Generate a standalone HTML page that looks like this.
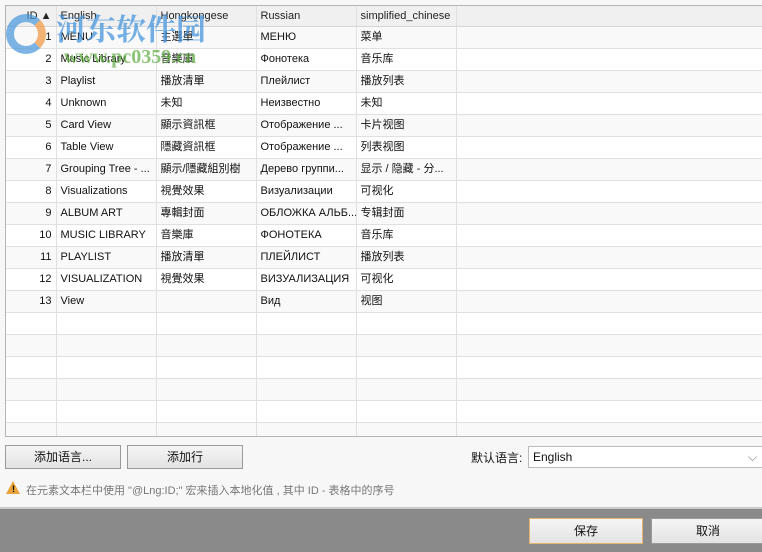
<!DOCTYPE html>
<html><head><meta charset="utf-8"><style>
*{margin:0;padding:0;box-sizing:border-box}
body{width:762px;height:552px;background:#f7f7f7;font-family:"Liberation Sans","Noto Sans CJK SC",sans-serif;font-size:11px;color:#111;position:relative;overflow:hidden}
.grid{position:absolute;left:5px;top:5px;width:760px;height:432px;border:1px solid #b5b5b5;background:#fff;overflow:hidden}
table{border-collapse:collapse;table-layout:fixed;width:760px}
td,th{height:22px;border-right:1px solid #e0e0e0;border-bottom:1px solid #e0e0e0;padding:0 4px;white-space:nowrap;overflow:hidden;font-weight:normal;text-align:left;vertical-align:middle;line-height:14px}
th{height:20px;background:#f0f0f0;color:#222;border-bottom:1px solid #d6d6d6}
td.id{text-align:right}
tr:nth-child(even) td{background:#f9f9f9}
.btn{position:absolute;height:24px;border:1px solid #9a9a9a;background:linear-gradient(#f5f5f5,#e3e3e3);text-align:center;line-height:22px;font-size:12px}
.foot{position:absolute;left:0;top:507px;width:762px;height:45px;background:#8a8a8a;border-top:2px solid #ccc}
.wm{position:absolute;top:10px;left:56px;font-size:30px;font-weight:bold;color:rgba(70,150,220,.75);font-family:"Noto Serif CJK SC",serif;line-height:34px}
.wm2{position:absolute;left:64px;top:46px;font-size:20px;font-weight:bold;color:rgba(90,170,60,.7);font-family:"Liberation Serif",serif}
.logo{position:absolute;left:6px;top:14px;width:40px;height:40px;border-radius:50%;border:8px solid rgba(70,150,220,.7);border-right-color:rgba(240,150,60,.7)}
</style></head><body>
<div class="grid">
<table>
<colgroup><col style="width:50px"><col style="width:100px"><col style="width:100px"><col style="width:100px"><col style="width:100px"><col></colgroup>
<tr><th style="text-align:right">ID ▲</th><th>English</th><th>Hongkongese</th><th>Russian</th><th>simplified_chinese</th><th style="border-right:none"></th></tr>
<tr><td class="id">1</td><td>MENU</td><td>主選單</td><td>МЕНЮ</td><td>菜单</td><td></td></tr>
<tr><td class="id">2</td><td>Music Library</td><td>音樂庫</td><td>Фонотека</td><td>音乐库</td><td></td></tr>
<tr><td class="id">3</td><td>Playlist</td><td>播放清單</td><td>Плейлист</td><td>播放列表</td><td></td></tr>
<tr><td class="id">4</td><td>Unknown</td><td>未知</td><td>Неизвестно</td><td>未知</td><td></td></tr>
<tr><td class="id">5</td><td>Card View</td><td>顯示資訊框</td><td>Отображение ...</td><td>卡片视图</td><td></td></tr>
<tr><td class="id">6</td><td>Table View</td><td>隱藏資訊框</td><td>Отображение ...</td><td>列表视图</td><td></td></tr>
<tr><td class="id">7</td><td>Grouping Tree - ...</td><td>顯示/隱藏組別樹</td><td>Дерево группи...</td><td>显示 / 隐藏 - 分...</td><td></td></tr>
<tr><td class="id">8</td><td>Visualizations</td><td>視覺效果</td><td>Визуализации</td><td>可视化</td><td></td></tr>
<tr><td class="id">9</td><td>ALBUM ART</td><td>專輯封面</td><td>ОБЛОЖКА АЛЬБ...</td><td>专辑封面</td><td></td></tr>
<tr><td class="id">10</td><td>MUSIC LIBRARY</td><td>音樂庫</td><td>ФОНОТЕКА</td><td>音乐库</td><td></td></tr>
<tr><td class="id">11</td><td>PLAYLIST</td><td>播放清單</td><td>ПЛЕЙЛИСТ</td><td>播放列表</td><td></td></tr>
<tr><td class="id">12</td><td>VISUALIZATION</td><td>視覺效果</td><td>ВИЗУАЛИЗАЦИЯ</td><td>可视化</td><td></td></tr>
<tr><td class="id">13</td><td>View</td><td></td><td>Вид</td><td>视图</td><td></td></tr>
<tr><td></td><td></td><td></td><td></td><td></td><td></td></tr>
<tr><td></td><td></td><td></td><td></td><td></td><td></td></tr>
<tr><td></td><td></td><td></td><td></td><td></td><td></td></tr>
<tr><td></td><td></td><td></td><td></td><td></td><td></td></tr>
<tr><td></td><td></td><td></td><td></td><td></td><td></td></tr>
<tr><td></td><td></td><td></td><td></td><td></td><td></td></tr>
</table>
</div>
<div class="logo"></div>
<div class="wm">河东软件园</div>
<div class="wm2">www.pc0359.cn</div>
<div class="btn" style="left:5px;top:445px;width:116px">添加语言...</div>
<div class="btn" style="left:127px;top:445px;width:116px">添加行</div>
<div style="position:absolute;left:471px;top:449px;font-size:12px">默认语言:</div>
<div style="position:absolute;left:528px;top:446px;width:236px;height:22px;border:1px solid #bbb;background:#fff;font-size:12px;line-height:20px;padding-left:4px">English<span style="position:absolute;right:6px;top:0;color:#777">⌵</span></div>
<div style="position:absolute;left:6px;top:481px;width:0;height:0;border-left:7px solid transparent;border-right:7px solid transparent;border-bottom:13px solid #e8a33a"></div>
<div style="position:absolute;left:12px;top:484px;font-size:9px;font-weight:bold;color:#000">!</div>
<div style="position:absolute;left:26px;top:482px;font-size:11px;color:#777">在元素文本栏中使用 "@Lng:ID;" 宏来插入本地化值 , 其中 ID - 表格中的序号</div>
<div class="foot"></div>
<div class="btn" style="left:529px;top:518px;width:114px;height:26px;line-height:24px;border-color:#e5b56a">保存</div>
<div class="btn" style="left:651px;top:518px;width:114px;height:26px;line-height:24px">取消</div>
</body></html>
